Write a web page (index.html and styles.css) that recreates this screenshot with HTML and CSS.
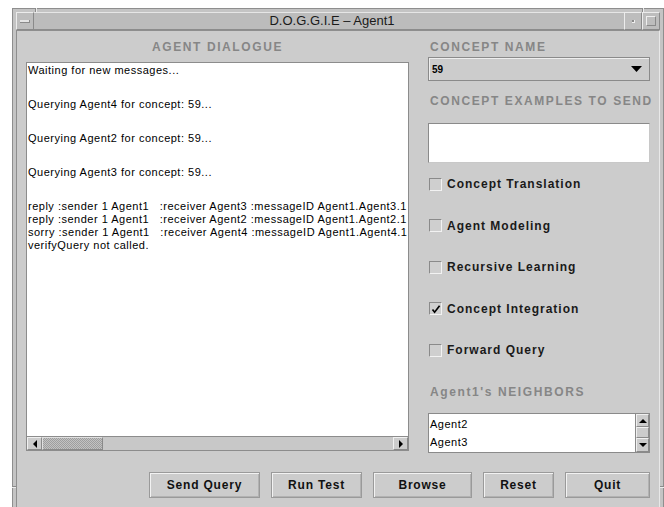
FILE: index.html
```html
<!DOCTYPE html>
<html lang="en">
<head>
<meta charset="utf-8">
<title>D.O.G.G.I.E – Agent1</title>
<link rel="stylesheet" href="styles.css">
</head>
<body>
<div class="window">
  <div class="titlebar">
    <div class="tb-btn"><span class="menu-bar"></span></div>
    <div class="title">D.O.G.G.I.E – Agent1</div>
    <div class="tb-btn"><span class="min-dot"></span></div>
    <div class="tb-btn"><span class="max-box"></span></div>
  </div>

  <div class="client">
    <div class="panes">
      <section class="left">
        <h2 class="caption centered">AGENT DIALOGUE</h2>
        <div class="textarea">
          <div class="log">
            <div class="msg">Waiting for new messages...</div>
            <div class="msg">Querying Agent4 for concept: 59...</div>
            <div class="msg">Querying Agent2 for concept: 59...</div>
            <div class="msg">Querying Agent3 for concept: 59...</div>
            <div class="line">reply :sender 1 Agent1   :receiver Agent3 :messageID Agent1.Agent3.1</div>
            <div class="line">reply :sender 1 Agent1   :receiver Agent2 :messageID Agent1.Agent2.1</div>
            <div class="line">sorry :sender 1 Agent1   :receiver Agent4 :messageID Agent1.Agent4.1</div>
            <div class="line">verifyQuery not called.</div>
          </div>
          <div class="hscroll">
            <div class="sb-btn">
              <svg width="6" height="8" viewBox="0 0 6 8"><polygon points="5,0 5,8 1,4" fill="#000"/></svg>
            </div>
            <div class="thumb"></div>
            <div class="track"></div>
            <div class="sb-btn">
              <svg width="6" height="8" viewBox="0 0 6 8"><polygon points="1,0 1,8 5,4" fill="#000"/></svg>
            </div>
          </div>
        </div>
      </section>

      <section class="right">
        <h2 class="caption side">CONCEPT NAME</h2>
        <div class="combo">
          <span class="combo-value">59</span>
          <svg class="combo-arrow" width="11" height="6" viewBox="0 0 11 6"><polygon points="0,0 11,0 5.5,6" fill="#000"/></svg>
        </div>

        <h2 class="caption side gap-lg">CONCEPT EXAMPLES TO SEND</h2>
        <div class="field"></div>

        <div class="checks">
          <label class="check"><span class="box"></span>Concept Translation</label>
          <label class="check"><span class="box"></span>Agent Modeling</label>
          <label class="check"><span class="box"></span>Recursive Learning</label>
          <label class="check"><span class="box">
            <svg width="10" height="10" viewBox="0 0 10 10"><path d="M1.5 5.5 L3.6 8.2 L8.6 1.8" fill="none" stroke="#000" stroke-width="1.7"/></svg>
          </span>Concept Integration</label>
          <label class="check"><span class="box"></span>Forward Query</label>
        </div>

        <h2 class="caption side neighbors">Agent1's NEIGHBORS</h2>
        <div class="list">
          <div class="items">
            <div class="item">Agent2</div>
            <div class="item">Agent3</div>
          </div>
          <div class="vscroll">
            <div class="sb-btn up">
              <svg width="8" height="6" viewBox="0 0 8 6"><polygon points="0,5 8,5 4,1" fill="#000"/></svg>
            </div>
            <div class="vthumb"></div>
            <div class="sb-btn down">
              <svg width="8" height="6" viewBox="0 0 8 6"><polygon points="0,1 8,1 4,5" fill="#000"/></svg>
            </div>
          </div>
        </div>
      </section>
    </div>

    <div class="buttons">
      <button class="btn w-send">Send Query</button>
      <button class="btn w-run">Run Test</button>
      <button class="btn w-browse">Browse</button>
      <button class="btn w-reset">Reset</button>
      <button class="btn w-quit">Quit</button>
    </div>
  </div>
</div>
</body>
</html>
```

FILE: styles.css
```css
* {
  box-sizing: border-box;
}

html,
body {
  margin: 0;
  height: 100%;
  overflow: hidden;
  background: #ffffff;
}

body {
  font-family: "Liberation Sans", Arial, Helvetica, sans-serif;
}

/* ---------- window frame ---------- */
.window {
  position: relative;
  margin: 8px 0 0 12px;
  width: 652px;
  height: 499px;
  padding: 3px 3px 0 3px;
  background: #c4c4c4;
  border: 1px solid #8e8e8e;
  border-bottom: none;
  display: flex;
  flex-direction: column;
}

/* resize-handle notches cut into the frame */
.window::before {
  content: "";
  position: absolute;
  left: 22px;
  top: -1px;
  width: 1px;
  height: 4px;
  background: #8a8a8a;
  box-shadow: 1px 0 0 #ececec, 607px 0 0 #8a8a8a, 608px 0 0 #ececec;
}

.window::after {
  content: "";
  position: absolute;
  left: -1px;
  top: 477px;
  width: 4px;
  height: 1px;
  background: #8a8a8a;
  box-shadow: 0 1px 0 #ececec, 648px 0 0 #8a8a8a, 648px 1px 0 #ececec;
}

.titlebar {
  height: 18px;
  display: flex;
  background: #bcbcbc;
  border-top: 1px solid #e6e6e6;
  border-bottom: 1px solid #8c8c8c;
}

.tb-btn {
  width: 18px;
  height: 18px;
  margin-top: -1px;
  border: 1px solid;
  border-color: #ececec #8a8a8a #8a8a8a #ececec;
  display: flex;
  align-items: center;
  justify-content: center;
  background: #bdbdbd;
}

.menu-bar {
  width: 10px;
  height: 3px;
  background: #e4e4e4;
  border-bottom: 1px solid #8a8a8a;
  border-right: 1px solid #8a8a8a;
}

.min-dot {
  width: 3px;
  height: 3px;
  background: #8a8a8a;
  border-right: 1px solid #efefef;
  border-bottom: 1px solid #efefef;
}

.max-box {
  width: 10px;
  height: 10px;
  border: 1px solid;
  border-color: #efefef #8a8a8a #8a8a8a #efefef;
}

.title {
  flex: 1;
  text-align: center;
  font-size: 13px;
  line-height: 16px;
  padding-left: 6px;
  color: #1a1a1a;
}

/* ---------- client area ---------- */
.client {
  flex: 1;
  background: #cccccc;
  border: 1px solid;
  border-bottom: none;
  border-color: #8e8e8e #e8e8e8 #e8e8e8 #8e8e8e;
  padding: 9px 9px 0 9px;
}

.panes {
  display: flex;
  align-items: flex-start;
  gap: 19px;
}

.left {
  width: 383px;
}

.right {
  width: 222px;
}

.caption {
  margin: 0;
  font-size: 12px;
  line-height: 14px;
  font-weight: bold;
  letter-spacing: 1.6px;
  color: #868686;
  white-space: nowrap;
}

.caption.centered {
  text-align: center;
}

.caption.side {
  padding-left: 2px;
}

/* ---------- dialogue text area ---------- */
.textarea {
  margin-top: 8px;
  height: 389px;
  background: #ffffff;
  border: 1px solid #8c8c8c;
  display: flex;
  flex-direction: column;
}

.log {
  flex: 1;
  overflow: hidden;
  padding: 1px 0 0 1px;
  font-size: 11px;
  line-height: 13px;
  letter-spacing: 0.5px;
  color: #000;
}

.msg,
.line {
  white-space: pre;
}

.msg {
  margin-bottom: 21px;
}

.hscroll {
  height: 14px;
  flex: none;
  display: flex;
  background: #c8c8c8;
  border-top: 1px solid #8c8c8c;
}

.sb-btn {
  width: 15px;
  background: #cccccc;
  border: 1px solid;
  border-color: #f0f0f0 #8a8a8a #8a8a8a #f0f0f0;
  display: flex;
  align-items: center;
  justify-content: center;
}

.thumb {
  width: 61px;
  border: 1px solid;
  border-color: #e0e0e0 #8a8a8a #8a8a8a #e0e0e0;
  background: repeating-conic-gradient(#9e9e9e 0 25%, #c2c2c2 0 50%) 0 0 / 2px 2px;
}

.track {
  flex: 1;
}

/* ---------- right column controls ---------- */
.combo {
  margin-top: 3px;
  height: 24px;
  display: flex;
  align-items: center;
  justify-content: space-between;
  padding: 0 7px 0 3px;
  background: #cccccc;
  border: 1px solid #8a8a8a;
  box-shadow: inset 1px 1px 0 #eeeeee;
}

.combo-value {
  font-size: 10px;
  font-weight: bold;
  color: #000;
}

.gap-lg {
  margin-top: 13px;
}

.field {
  margin-top: 15px;
  height: 40px;
  background: #ffffff;
  border: 1px solid;
  border-color: #8a8a8a #c8c8c8 #c8c8c8 #8a8a8a;
}

.checks {
  margin-top: 14px;
  display: flex;
  flex-direction: column;
  gap: 27.5px;
}

.check {
  height: 14px;
  display: flex;
  align-items: center;
  gap: 5px;
  padding-left: 1px;
  font-size: 12px;
  font-weight: bold;
  letter-spacing: 1px;
  color: #1a1a1a;
}

.box {
  width: 13px;
  height: 13px;
  flex: none;
  background: #cfcfcf;
  border: 1px solid;
  border-color: #8a8a8a #f2f2f2 #f2f2f2 #8a8a8a;
  display: flex;
  align-items: center;
  justify-content: center;
}

.neighbors {
  margin-top: 28px;
}

.list {
  margin-top: 14px;
  height: 40px;
  display: flex;
  background: #ffffff;
  border: 1px solid #8a8a8a;
}

.items {
  flex: 1;
  padding: 1px 0 0 1px;
  font-size: 11px;
  line-height: 18px;
  letter-spacing: 0.5px;
  color: #000;
}

.vscroll {
  width: 14px;
  display: flex;
  flex-direction: column;
  background: #c8c8c8;
  border-left: 1px solid #8a8a8a;
}

.vscroll .sb-btn {
  width: auto;
  height: 13px;
}

.vscroll .down {
  height: 14px;
}

.vthumb {
  flex: 1;
  background: #cccccc;
  border: 1px solid;
  border-color: #f0f0f0 #8a8a8a #8a8a8a #f0f0f0;
}

/* ---------- button row ---------- */
.buttons {
  margin-top: 19px;
  display: flex;
  justify-content: flex-end;
  gap: 11px;
}

.btn {
  height: 26px;
  padding: 0;
  font-family: inherit;
  font-size: 12px;
  font-weight: bold;
  letter-spacing: 0.8px;
  color: #111;
  background: #cccccc;
  border: 1px solid #9a9a9a;
  box-shadow: inset 1px 1px 0 #f2f2f2, inset -1px -1px 0 #b2b2b2;
}

.w-send { width: 111px; }
.w-run { width: 91px; }
.w-browse { width: 99px; }
.w-reset { width: 71px; }
.w-quit { width: 85px; }
```
